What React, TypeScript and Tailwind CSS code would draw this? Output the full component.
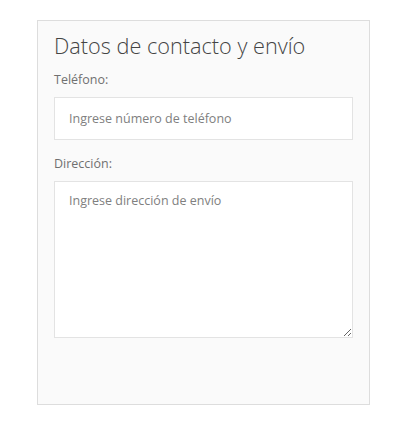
const App = () => {
  return (
    <div
      className="min-h-[424px] bg-white pl-[37px] pt-5"
      style={{ fontFamily: '"Open Sans", sans-serif' }}
    >
      <div className="h-[385px] w-[333px] border border-[#dddddd] bg-[#fafafa] px-4 pt-[9px]">
        <h3 className="text-[21.7px] font-light leading-[32px] text-[#444444]">
          Datos de contacto y envío
        </h3>

        <label className="mt-[9px] block text-[12.5px] leading-[18px] text-[#707070]">
          Teléfono:
        </label>
        <input
          type="text"
          placeholder="Ingrese número de teléfono"
          className="mt-[8px] block h-[43px] w-full border border-[#e3e3e3] bg-white px-[14px] text-[12.5px] text-[#555555] outline-none placeholder:text-[#808080]"
        />

        <label className="mt-[15px] block text-[12.5px] leading-[18px] text-[#707070]">
          Dirección:
        </label>
        <textarea
          placeholder="Ingrese dirección de envío"
          className="mt-[8px] block h-[157px] w-full border border-[#e3e3e3] bg-white px-[14px] py-[10px] text-[12.5px] text-[#555555] outline-none placeholder:text-[#808080]"
        />
      </div>
    </div>
  )
}

export default App
